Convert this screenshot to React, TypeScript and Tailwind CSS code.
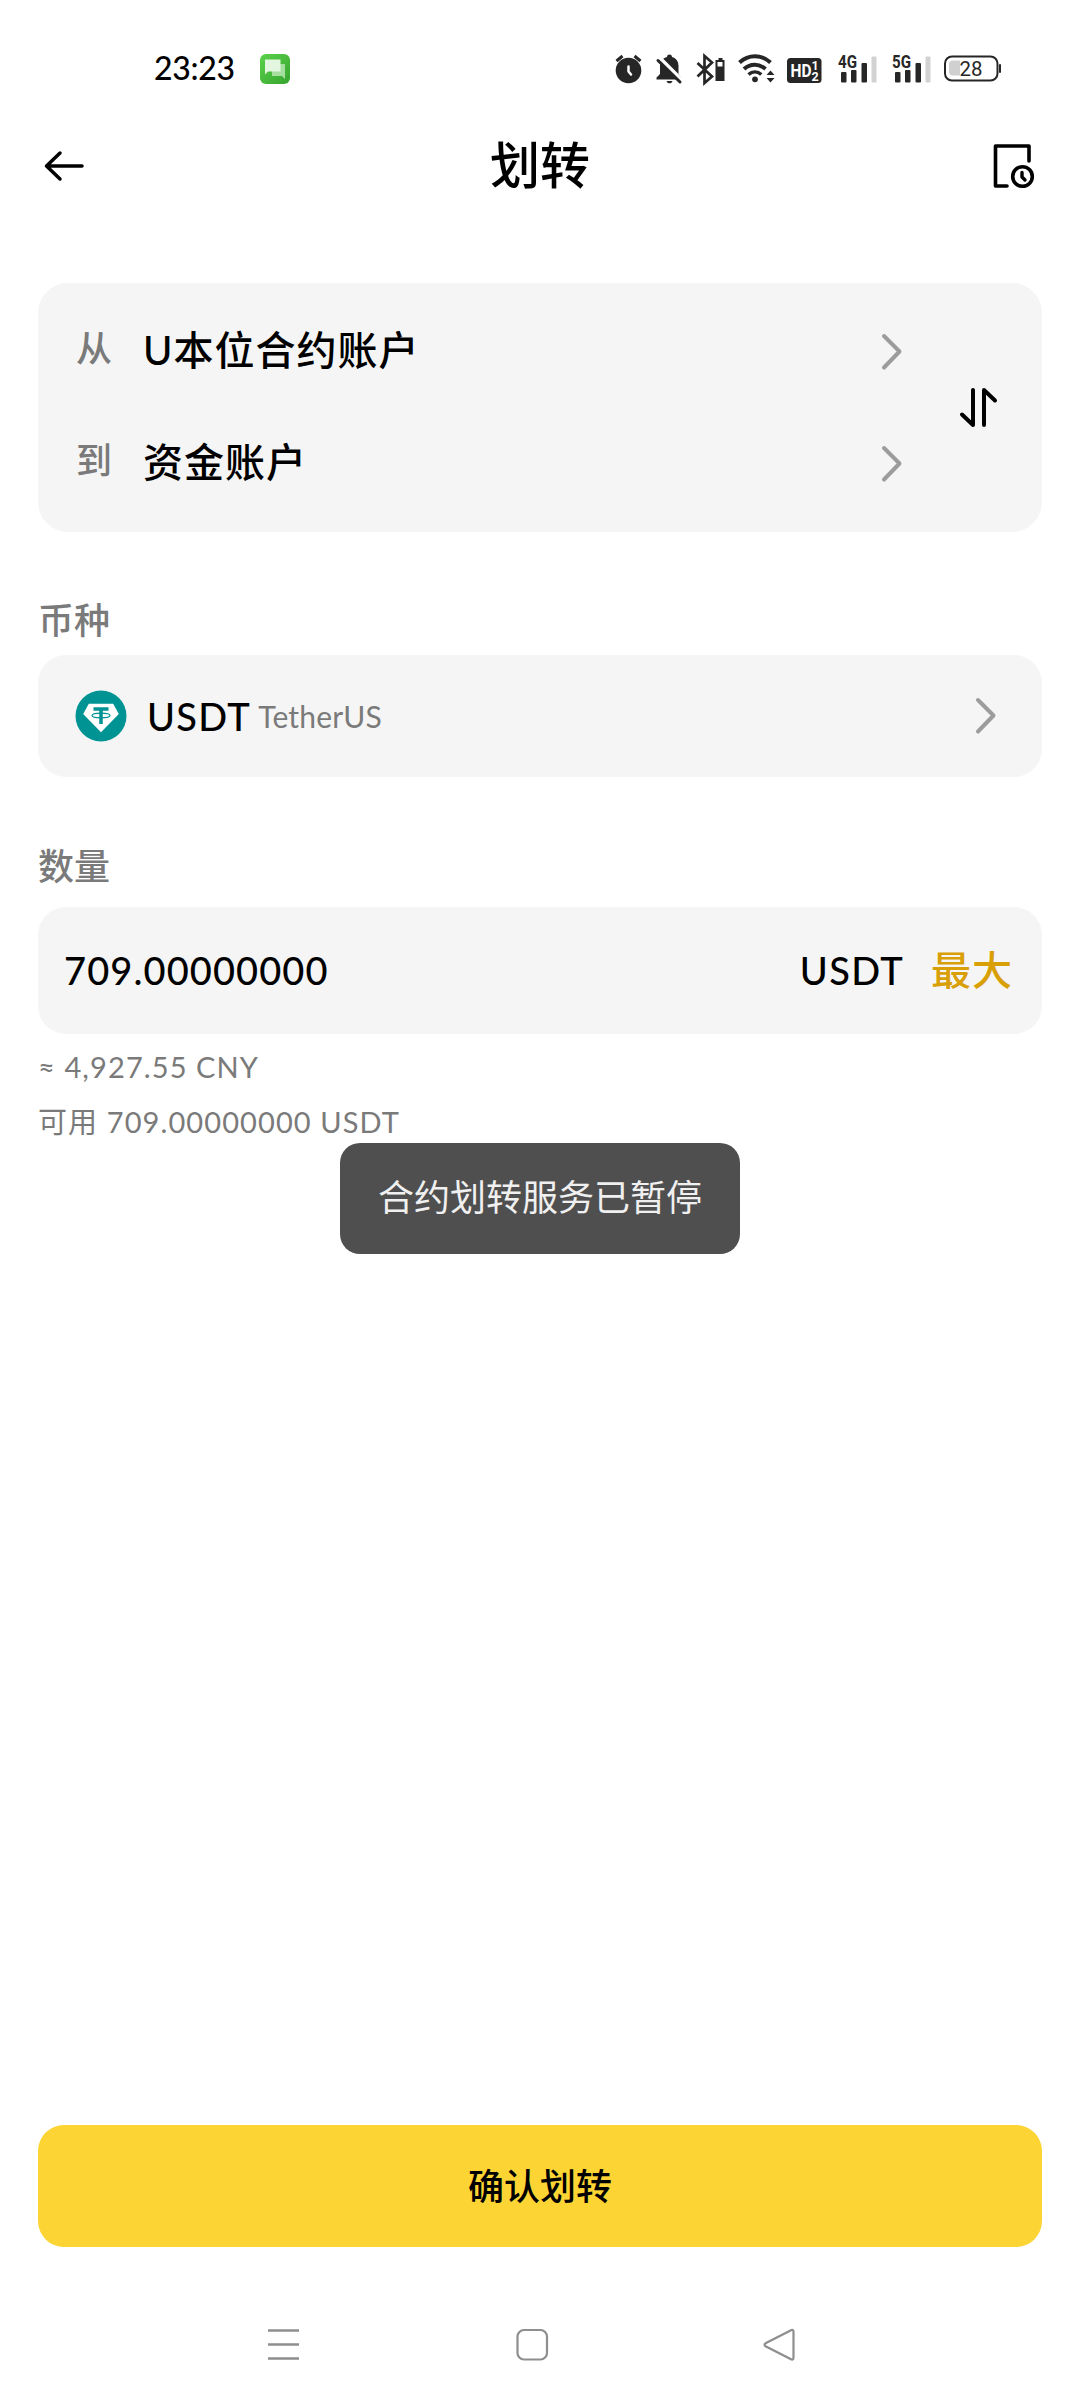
import type { ReactNode } from "react";

type IconProps = { box: string; className: string; children: ReactNode };

function Icon({ box, className, children }: IconProps) {
  return (
    <svg viewBox={box} className={`shrink-0 ${className}`} fill="none" strokeLinecap="round" strokeLinejoin="round">
      {children}
    </svg>
  );
}

function Chevron() {
  return (
    <Icon box="0 0 24 40" className="w-6 h-10">
      <path d="M4 4 19.500 19.500 4 35.500" stroke="#9c9c9c" strokeWidth="4" />
    </Icon>
  );
}

function Signal({ label }: { label: string }) {
  return (
    <Icon box="0 0 42 36" className="w-[42px] h-9">
      <text x="0" y="16.500" fontSize="18.500" fontWeight="700" fill="#262626" textLength="19" lengthAdjust="spacingAndGlyphs" fontFamily="Roboto, sans-serif">
        {label}
      </text>
      <g fill="#262626">
        <rect x="3" y="21" width="5.500" height="10.500" rx="1" />
        <rect x="13" y="19" width="5.500" height="12.500" rx="1" />
        <rect x="23.500" y="12" width="5.500" height="19.500" rx="1" />
      </g>
      <rect x="33.500" y="5.500" width="5" height="26" rx="1" fill="#d2d2d2" />
    </Icon>
  );
}

function StatusBar() {
  return (
    <div className="flex items-center h-[138px] pl-[154px]">
      <span className="w-[106px] pb-0.5 text-[32px] leading-9 font-medium tracking-[-0.3px]">23:23</span>
      <Icon box="0 0 30 30" className="w-[30px] h-[30px]">
        <defs>
          <linearGradient id="msg" x1="0" y1="0" x2="1" y2="1">
            <stop stopColor="#5bd24b" />
            <stop offset="1" stopColor="#36a42f" />
          </linearGradient>
        </defs>
        <rect width="30" height="30" rx="6" fill="url(#msg)" />
        <path d="M12 10h13v15l-3-3H12z" fill="#a5dfa0" />
        <path d="M5 5.500h15.500v12H8L5 20.500z" fill="#e3f6e0" />
      </Icon>

      <div className="flex items-center ml-[322px]">
        {/* alarm */}
        <Icon box="612 51 36 36" className="w-9 h-9">
          <circle cx="628.500" cy="70.500" r="12.800" fill="#262626" />
          <path d="m616.500 61 6-5M640.500 61l-6-5" stroke="#262626" strokeWidth="3" strokeLinecap="butt" />
          <path d="M628.500 66.500v5l2.500 3" stroke="#fff" strokeWidth="2.500" />
        </Icon>
        {/* muted bell */}
        <Icon box="648 51 42 36" className="w-[42px] h-9">
          <path d="M669.500 54.500c1.600 0 2.500 1 2.500 2.500 4.300 1.200 6.500 4.700 6.500 9v8l3 3.500v2h-25v-2l3.500-3.500v-8c0-4.300 2.500-7.800 7-9 0-1.500.9-2.500 2.500-2.500z" fill="#262626" />
          <path d="M666.500 81h6c-.5 1.700-1.500 2.300-3 2.300s-2.500-.6-3-2.300z" fill="#262626" />
          <path d="m659.500 57.500 23.500 23.500" stroke="#fff" strokeWidth="3.500" />
          <path d="m658 60.500 22 21.500" stroke="#262626" strokeWidth="3" />
        </Icon>
        {/* bluetooth with headset battery */}
        <Icon box="690 51 42 36" className="w-[42px] h-9">
          <path d="m697.500 63 14.500 13.500-7.500 6.500V56l7.500 6.500L697.500 76.500" stroke="#262626" strokeWidth="2.700" strokeLinejoin="miter" strokeLinecap="butt" />
          <path d="M718.500 58h4v2h2v21h-9V60h3z" fill="#262626" />
          <rect x="717.500" y="62" width="5" height="4.500" fill="#fff" />
        </Icon>
        {/* wifi */}
        <Icon box="732 51 50 36" className="w-[50px] h-9">
          <path d="M739.500 62.500c9-8.300 22-8.300 31 0M744 69c6.400-5.700 15-5.700 21.500 0" stroke="#262626" strokeWidth="4" strokeLinecap="butt" />
          <path d="M748.500 74.500c3.900-3.400 9-3.400 12.800 0" stroke="#262626" strokeWidth="3.500" strokeLinecap="butt" />
          <circle cx="755" cy="79.300" r="2.900" fill="#262626" />
          <path d="m766.500 75 4-4.500 4 4.500zM766.500 78h8l-4 4.500z" fill="#262626" />
        </Icon>
        {/* HD 1/2 */}
        <Icon box="782 51 54 36" className="w-[54px] h-9">
          <rect x="787" y="58" width="34.500" height="25" rx="3.500" fill="#262626" />
          <g fill="#fff" fontFamily="Roboto, sans-serif" fontWeight="700">
            <text x="790.500" y="77" fontSize="18" textLength="21" lengthAdjust="spacingAndGlyphs">HD</text>
            <text x="811.500" y="70" fontSize="12.500">1</text>
            <text x="811.500" y="80.500" fontSize="12.500">2</text>
          </g>
        </Icon>
        <div className="flex ml-0.5">
          <Signal label="4G" />
          <div className="ml-3">
            <Signal label="5G" />
          </div>
        </div>
        {/* battery */}
        <Icon box="936 51 70 36" className="ml-0.5 w-[70px] h-9">
          <rect x="945" y="56.500" width="52.500" height="24" rx="7" stroke="#262626" strokeWidth="2" />
          <path d="M953 60.500h7v15h-7a4 4 0 0 1-4-4v-7a4 4 0 0 1 4-4z" fill="#d0d0d0" />
          <rect x="999" y="64" width="2" height="9" rx="1" fill="#262626" />
          <text x="959.500" y="75.500" fontSize="20" fill="#262626" textLength="23" lengthAdjust="spacingAndGlyphs" fontFamily="Roboto, sans-serif">28</text>
        </Icon>
      </div>
    </div>
  );
}

function AccountRow({ label, account }: { label: string; account: string }) {
  return (
    <div className="flex items-center h-28">
      <span className="w-[67px] pb-2 text-[36px] leading-[46px] text-[#7a7a7a] font-medium">{label}</span>
      <span className="flex-1 pb-[3px] text-[40px] leading-[50px] tracking-[1px] font-medium">{account}</span>
      <Chevron />
    </div>
  );
}

export default function App() {
  return (
    <div className="relative flex flex-col w-[1080px] h-[2400px] bg-white text-black overflow-hidden whitespace-nowrap font-[Lato,'Noto_Sans_CJK_SC',sans-serif]">
      <StatusBar />

      {/* Header */}
      <header className="flex items-center justify-between h-14 px-[38px]">
        <Icon box="38 140 56 52" className="w-14 h-[52px]">
          <path d="M82 166H47M60 153 46.500 166l13.500 13" stroke="#000" strokeWidth="3.500" />
        </Icon>
        <h1 className="pb-0.5 text-[50px] leading-[54px] font-medium">划转</h1>
        <Icon box="986 140 56 52" className="w-14 h-[52px]">
          <path d="M1029 161v-15h-33.500v40h11.500" stroke="#000" strokeWidth="3.600" />
          <circle cx="1022.500" cy="176.500" r="9.800" stroke="#000" strokeWidth="3.600" />
          <path d="M1022 172.500v4.500l3 3" stroke="#000" strokeWidth="3.400" />
        </Icon>
      </header>

      {/* Accounts */}
      <section className="flex items-center mt-[89px] mx-[38px] h-[249px] pl-[38px] pr-[42px] rounded-[30px] bg-[#f5f5f5]">
        <div className="w-[828px]">
          <AccountRow label="从" account="U本位合约账户" />
          <AccountRow label="到" account="资金账户" />
        </div>
        <Icon box="956 384 44 48" className="ml-[52px] w-11 h-12">
          <path d="M973 390v35l-11-10.500M984 425v-35l11 10.500" stroke="#000" strokeWidth="4" />
        </Icon>
      </section>

      {/* Coin */}
      <h2 className="mt-[63px] ml-[38px] h-[60px] text-[36px] leading-[50px] text-[#7a7a7a] font-medium">币种</h2>
      <section className="flex items-center mx-[38px] h-[122px] pl-[37px] pr-[44px] rounded-[28px] bg-[#f5f5f5]">
        <Icon box="0 0 52 52" className="w-[52px] h-[52px]">
          <circle cx="26" cy="26" r="25.500" fill="#009393" />
          <path d="M13.800 13.700h24.400L43.800 24 26 42.300 8.200 24z" fill="#fff" />
          <path d="M18.500 19h15M26 19v15" stroke="#009393" strokeWidth="3.500" strokeLinecap="butt" />
          <ellipse cx="26" cy="25.500" rx="9" ry="2.300" stroke="#009393" strokeWidth="1.200" />
        </Icon>
        <span className="ml-5 text-[38px] leading-[50px] tracking-[1.3px] font-medium">USDT</span>
        <span className="ml-[7px] flex-1 text-[30px] leading-10 tracking-[0.2px] text-[#7a7a7a]">TetherUS</span>
        <Chevron />
      </section>

      {/* Amount */}
      <h2 className="mt-[64px] ml-[38px] h-[66px] text-[36px] leading-[50px] text-[#7a7a7a] font-medium">数量</h2>
      <section className="flex items-center mx-[38px] h-[127px] pl-[26px] pr-[29px] pb-0.5 rounded-[28px] bg-[#f5f5f5]">
        <span className="flex-1 text-[38px] leading-[50px] tracking-[1.1px] font-medium">709.00000000</span>
        <span className="text-[38px] leading-[50px] tracking-[1.3px] font-medium">USDT</span>
        <button className="ml-[27px] text-[40px] leading-[50px] tracking-[1px] font-medium text-[#d99f07]">最大</button>
      </section>
      <p className="mt-[5px] ml-[38px] text-[29px] leading-[55px] tracking-[1.1px] text-[#7a7a7a]">≈ 4,927.55 CNY</p>
      <p className="ml-[38px] text-[29px] leading-[55px] tracking-[1.1px] text-[#7a7a7a]">可用 709.00000000 USDT</p>

      {/* Toast */}
      <div className="absolute left-[340px] top-[1143px] flex items-center justify-center w-[400px] h-[111px] pb-[3px] rounded-[20px] bg-[#4f4f4f] text-[36px] text-[#f0f0f0]">
        合约划转服务已暂停
      </div>

      <button className="mt-auto mx-[38px] h-[122px] shrink-0 rounded-[26px] bg-[#fcd535] text-[36px] font-medium">确认划转</button>

      {/* System navigation */}
      <nav className="flex items-center mt-[78px] mb-[35px] pl-[263px] h-10">
        <Icon box="0 0 40 40" className="w-10 h-10">
          <path d="M5 5.500h31M5 19.500h31M5 33.500h31" stroke="#8e8e8e" strokeWidth="2.500" strokeLinecap="butt" />
        </Icon>
        <Icon box="0 0 40 40" className="ml-[209px] w-10 h-10">
          <rect x="5.500" y="5" width="29.500" height="29.500" rx="6.500" stroke="#8e8e8e" strokeWidth="2.200" />
        </Icon>
        <Icon box="0 0 40 40" className="ml-[207px] w-10 h-10">
          <path d="M32.500 5 7 18q-3 1.700 0 3.500L32.500 34.500q2 .5 2-2V7q0-2.500-2-2z" stroke="#8e8e8e" strokeWidth="2.200" />
        </Icon>
      </nav>
    </div>
  );
}
